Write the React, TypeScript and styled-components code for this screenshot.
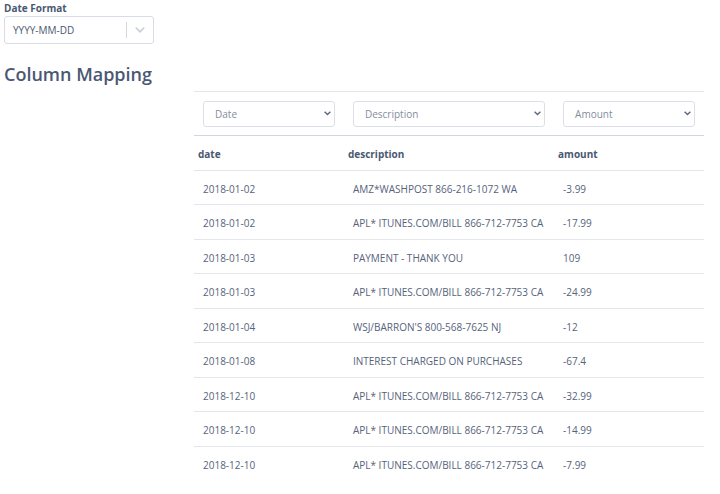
import React from "react";
import styled, { createGlobalStyle } from "styled-components";

const Global = createGlobalStyle`
  *, *::before, *::after { box-sizing: border-box; }
  body { margin: 0; background: #fff; color: #4a5872; font-family: "Open Sans", "Noto Sans", sans-serif; font-size: 10px; line-height: 16px; }
`;

const Page = styled.main`
  padding: 0 16px 0 4px;
`;
const FieldLabel = styled.label`
  display: block;
  font-weight: 700;
`;
const SelectBox = styled.button`
  display: flex;
  align-items: center;
  width: 150px;
  height: 28px;
  padding: 0 0 0 8px;
  border: 1px solid #d9dce6;
  border-radius: 3px;
  background: #fff;
  color: #4a5872;
  font: inherit;
  text-align: left;
`;
const SelectValue = styled.span`
  flex: 1;
`;
const SelectIndicator = styled.span`
  display: flex;
  align-items: center;
  justify-content: center;
  width: 27px;
  height: 16px;
  border-left: 1px solid #d4d7dd;
  color: #c9cdd4;
`;
const Heading = styled.h1`
  margin: 18px 0 5px;
  font-size: 18px;
  line-height: 24px;
  font-weight: 600;
`;
const Table = styled.table`
  width: calc(100% - 190px);
  margin-left: 190px;
  border-collapse: separate;
  border-spacing: 0;
  table-layout: fixed;
`;
const Column = styled.col<{ $share?: string }>`
  width: ${(p) => p.$share ?? "auto"};
`;
const FilterCell = styled.td`
  height: 45px;
  padding: 0 9px;
  border-top: 1px solid #e4e6ec;
  border-bottom: 1px solid #d2d5df;
`;
const SelectWrap = styled.div`
  display: grid;
  align-items: center;
  > * { grid-area: 1 / 1; }
  > svg { justify-self: end; margin-right: 4px; pointer-events: none; }
`;
const ColumnSelect = styled.select`
  appearance: none;
  width: 100%;
  height: 26px;
  padding: 1px 11px 0;
  border: 1px solid #dcdfe8;
  border-radius: 3px;
  background: #fff;
  color: #858d9d;
  font: inherit;
`;
const HeaderCell = styled.th`
  height: 35px;
  padding: 2px 4px 0;
  text-align: left;
  font-weight: 700;
  border-bottom: 1px solid #e4e6ec;
`;
const Cell = styled.td`
  height: 34px;
  padding: 2px 9px 0;
  color: #56637b;
  white-space: nowrap;
  border-bottom: 1px solid #e4e6ec;
  tr:nth-child(even) > & { height: 35px; }
  tr:last-child > & { border-bottom: 0; }
`;

const rows = [
  ["2018-01-02", "AMZ*WASHPOST 866-216-1072 WA", "-3.99"],
  ["2018-01-02", "APL* ITUNES.COM/BILL 866-712-7753 CA", "-17.99"],
  ["2018-01-03", "PAYMENT - THANK YOU", "109"],
  ["2018-01-03", "APL* ITUNES.COM/BILL 866-712-7753 CA", "-24.99"],
  ["2018-01-04", "WSJ/BARRON'S 800-568-7625 NJ", "-12"],
  ["2018-01-08", "INTEREST CHARGED ON PURCHASES", "-67.4"],
  ["2018-12-10", "APL* ITUNES.COM/BILL 866-712-7753 CA", "-32.99"],
  ["2018-12-10", "APL* ITUNES.COM/BILL 866-712-7753 CA", "-14.99"],
  ["2018-12-10", "APL* ITUNES.COM/BILL 866-712-7753 CA", "-7.99"],
];
const fields = ["Date", "Description", "Amount"];

export default function App() {
  return (
    <Page>
      <Global />
      <FieldLabel htmlFor="date-format">Date Format</FieldLabel>
      <SelectBox id="date-format" type="button" aria-haspopup="listbox">
        <SelectValue>YYYY-MM-DD</SelectValue>
        <SelectIndicator>
          <svg width="10" height="6" viewBox="0 0 10 6" fill="none" stroke="currentColor" strokeWidth="1.6" strokeLinecap="round"><path d="M1.2 1L5 4.8 8.8 1" /></svg>
        </SelectIndicator>
      </SelectBox>
      <Heading>Column Mapping</Heading>
      <Table>
        <colgroup>
          <Column $share="29.4%" />
          <Column />
          <Column $share="29.4%" />
        </colgroup>
        <thead>
          <tr>
            {fields.map((f) => (
              <FilterCell key={f}>
                <SelectWrap>
                  <ColumnSelect aria-label={`${f} column`} defaultValue={f}>
                    {fields.map((o) => <option key={o}>{o}</option>)}
                  </ColumnSelect>
                  <svg width="7" height="5" viewBox="0 0 7 5" fill="none" stroke="#5d6a82" strokeWidth="1.5"><path d="M.6 .8l2.9 2.7L6.4 .8" /></svg>
                </SelectWrap>
              </FilterCell>
            ))}
          </tr>
          <tr>
            {fields.map((f) => <HeaderCell key={f} scope="col">{f.toLowerCase()}</HeaderCell>)}
          </tr>
        </thead>
        <tbody>
          {rows.map((r, i) => (
            <tr key={i}>{r.map((c, j) => <Cell key={j}>{c}</Cell>)}</tr>
          ))}
        </tbody>
      </Table>
    </Page>
  );
}
